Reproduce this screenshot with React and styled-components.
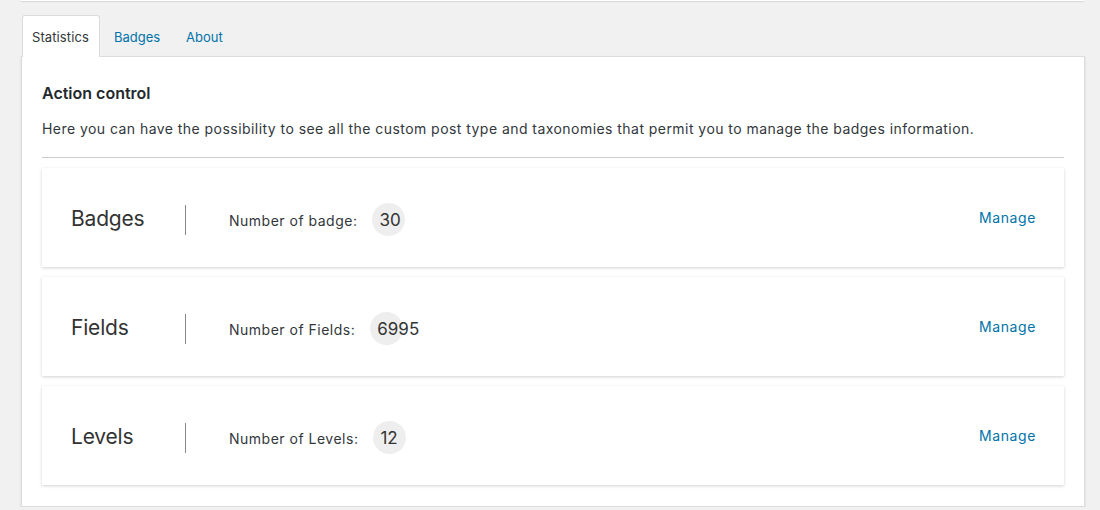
import React from "react";
import styled, { createGlobalStyle } from "styled-components";

const Global = createGlobalStyle`
  html, body { margin: 0; padding: 0; background: #f1f1f1; }
  body { font-family: "Inter", "Liberation Sans", sans-serif; color: #32373c; }
  * { box-sizing: border-box; }
`;

const Page = styled.div`
  padding: 0 15px 0 21px;
  display: flex;
  flex-direction: column;
`;

const TopStrip = styled.div`
  height: 1px;
  margin-right: 1px;
  background: #fff;
  box-shadow: 0 1px 1px rgba(0, 0, 0, 0.12);
`;

const TabBar = styled.nav`
  display: flex;
  align-items: flex-end;
  margin-top: 14px;
  padding-left: 1px;
  position: relative;
  z-index: 1;
`;

const Tab = styled.a`
  display: flex;
  align-items: center;
  height: 42px;
  padding: ${(p) => (p.$active ? "0 10px 0 9px" : "0 11px 0 13px")};
  font-size: 13px;
  letter-spacing: ${(p) => (p.$active ? "0.1px" : "0")};
  text-decoration: none;
  color: ${(p) => (p.$active ? "#32373c" : "#0073aa")};
  background: ${(p) => (p.$active ? "#fff" : "transparent")};
  border: 1px solid ${(p) => (p.$active ? "#dcdcdc" : "transparent")};
  border-bottom: none;
  border-radius: 3px 3px 0 0;
  margin-bottom: -1px;
`;

const Panel = styled.section`
  background: #fff;
  border: 1px solid #dcdcdc;
  box-shadow: 0 1px 2px rgba(0, 0, 0, 0.12);
  padding: 26px 20px 20px;
  height: 451px;
`;

const Heading = styled.h2`
  margin: 0;
  font-size: 16px;
  font-weight: 600;
  color: #23282d;
  line-height: 20px;
`;

const Description = styled.p`
  margin: 17px 0 0;
  font-size: 14px;
  line-height: 18px;
  letter-spacing: 0.45px;
  color: #32373c;
`;

const Divider = styled.hr`
  border: none;
  border-top: 1px solid #ccc;
  margin: 19px 0 10px;
`;

const CardList = styled.div`
  display: flex;
  flex-direction: column;
  gap: 10px;
`;

const Card = styled.div`
  display: flex;
  align-items: center;
  height: 99px;
  background: #fff;
  box-shadow: 0 1px 3px rgba(0, 0, 0, 0.18);
  padding: 0 28px 0 29px;
`;

const CardTitle = styled.div`
  width: 114px;
  font-size: 21px;
  color: #333;
  letter-spacing: -0.2px;
  margin-top: 2px;
`;

const Separator = styled.div`
  width: 1px;
  height: 30px;
  background: #888;
  margin-right: 43px;
  margin-top: 4px;
`;

const Label = styled.span`
  font-size: 14px;
  letter-spacing: 0.5px;
  color: #32373c;
  margin-right: 15px;
  margin-top: 6px;
`;

const Count = styled.span`
  display: inline-flex;
  align-items: center;
  width: 33px;
  height: 33px;
  border-radius: 50%;
  background: #eeeeee;
  padding-left: 7px;
  margin-top: 4px;
  font-size: 17px;
  color: #333;
  white-space: nowrap;
  overflow: visible;
`;

const Manage = styled.a`
  margin-left: auto;
  font-size: 14px;
  letter-spacing: 0.6px;
  color: #0073aa;
  text-decoration: none;
`;

const rows = [
  { title: "Badges", label: "Number of badge:", count: "30" },
  { title: "Fields", label: "Number of Fields:", count: "6995" },
  { title: "Levels", label: "Number of Levels:", count: "12" },
];

export default function App() {
  return (
    <Page>
      <Global />
      <TopStrip />
      <TabBar>
        <Tab $active href="#">Statistics</Tab>
        <Tab href="#">Badges</Tab>
        <Tab href="#">About</Tab>
      </TabBar>
      <Panel>
        <Heading>Action control</Heading>
        <Description>
          Here you can have the possibility to see all the custom post type and taxonomies that permit you to manage the badges information.
        </Description>
        <Divider />
        <CardList>
          {rows.map((r) => (
            <Card key={r.title}>
              <CardTitle>{r.title}</CardTitle>
              <Separator />
              <Label>{r.label}</Label>
              <Count>{r.count}</Count>
              <Manage href="#">Manage</Manage>
            </Card>
          ))}
        </CardList>
      </Panel>
    </Page>
  );
}
